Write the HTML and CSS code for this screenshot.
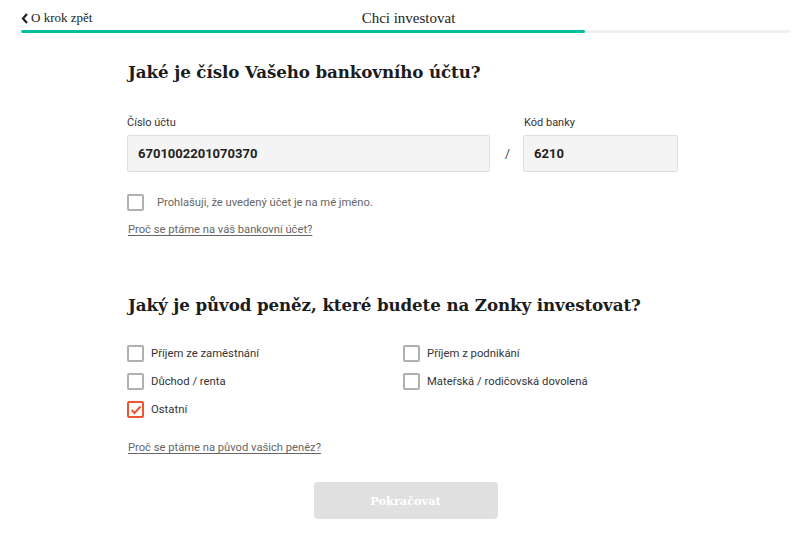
FILE: index.html
```html
<!DOCTYPE html>
<html lang="cs">
<head>
<meta charset="utf-8">
<title>Chci investovat</title>
<link rel="stylesheet" href="styles.css">
</head>
<body>
<header class="topbar">
  <div class="topbar-row">
    <a class="back" href="#">
      <svg class="back-icon" width="8" height="11" viewBox="0 0 8 11"><path d="M6 1 L2 5.5 L6 10" fill="none" stroke="#222" stroke-width="2.2"/></svg>
      <span>O krok zpět</span>
    </a>
    <div class="title">Chci investovat</div>
    <div class="spacer"></div>
  </div>
  <div class="progress"><div class="progress-fill" style="width: 73.3%"></div></div>
</header>

<main class="main">
  <h1 class="heading heading-first">Jaké je číslo Vašeho bankovního účtu?</h1>

  <div class="fields">
    <div class="field field-account">
      <label class="field-label">Číslo účtu</label>
      <div class="input">6701002201070370</div>
    </div>
    <div class="sep">/</div>
    <div class="field field-bank">
      <label class="field-label">Kód banky</label>
      <div class="input">6210</div>
    </div>
  </div>

  <div class="declare">
    <span class="box"></span>
    <span class="declare-text">Prohlašuji, že uvedený účet je na mé jméno.</span>
  </div>

  <a class="why why-first" href="#">Proč se ptáme na váš bankovní účet?</a>

  <h2 class="heading heading-second">Jaký je původ peněz, které budete na Zonky investovat?</h2>

  <div class="options">
    <div class="option"><span class="box"></span><span>Příjem ze zaměstnání</span></div>
    <div class="option"><span class="box"></span><span>Příjem z podnikání</span></div>
    <div class="option"><span class="box"></span><span>Důchod / renta</span></div>
    <div class="option"><span class="box"></span><span>Mateřská / rodičovská dovolená</span></div>
    <div class="option"><span class="box box-checked"><svg width="12" height="10" viewBox="0 0 12 10"><path d="M1.5 5 L4.5 8 L10.5 1.5" fill="none" stroke="#ee5532" stroke-width="2"/></svg></span><span>Ostatní</span></div>
  </div>

  <a class="why why-second" href="#">Proč se ptáme na původ vašich peněz?</a>

  <div class="actions">
    <button class="btn" type="button">Pokračovat</button>
  </div>
</main>
</body>
</html>
```

FILE: styles.css
```css
* { box-sizing: border-box; }

body {
  margin: 0;
  background: #fff;
  font-family: Roboto, "Liberation Sans", sans-serif;
  color: #333;
}

.topbar {
  padding: 0 21px 0 21px;
}

.topbar-row {
  display: grid;
  grid-template-columns: 1fr auto 1fr;
  align-items: center;
  height: 30px;
  padding-top: 6px;
}

.back {
  display: flex;
  align-items: center;
  gap: 2px;
  color: #222;
  text-decoration: none;
  font-family: "Liberation Serif", serif;
  font-size: 13px;
}

.back-icon { display: block; margin-left: 0; }

.title {
  font-family: "Liberation Serif", serif;
  font-size: 15px;
  color: #222;
  padding-left: 6px;
}

.progress {
  height: 3px;
  background: #f0f0f0;
  border-radius: 2px;
  overflow: hidden;
}

.progress-fill {
  height: 100%;
  background: #00bf9c;
  border-radius: 2px;
}

.main {
  width: 555px;
  margin: 0 auto;
}

.heading {
  font-family: "DejaVu Serif", serif;
  font-weight: bold;
  font-size: 16.7px;
  line-height: 24px;
  color: #1c1c1c;
  margin: 0;
  letter-spacing: -0.1px;
}

.heading-first { margin-top: 27px; }
.heading-second { margin-top: 56px; }

.fields {
  display: flex;
  align-items: flex-end;
  margin-top: 32px;
}

.field-label {
  display: block;
  font-size: 11px;
  line-height: 14px;
  color: #333;
  margin-bottom: 5px;
}

.field-account { width: 363px; margin-left: -1px; }
.field-bank { width: 155px; }
.field-bank .field-label { padding-left: 1px; }

.input {
  height: 37px;
  background: #f4f4f4;
  border: 1px solid #dedede;
  border-radius: 2px;
  padding-left: 10px;
  display: flex;
  align-items: center;
  font-size: 13px;
  font-weight: bold;
  color: #222;
}

.sep {
  width: 33px;
  height: 37px;
  display: flex;
  align-items: center;
  justify-content: center;
  font-size: 12px;
  color: #333;
  padding-left: 2px;
}

.box {
  width: 17px;
  height: 17px;
  border: 2px solid #b0b0b0;
  border-radius: 2px;
  flex: none;
  display: flex;
  align-items: center;
  justify-content: center;
  background: #fff;
}

.box-checked { border-color: #ee5532; }
.box-checked svg { display: block; }

.declare {
  display: flex;
  align-items: center;
  gap: 13px;
  margin-top: 22px;
  margin-left: -1px;
  font-size: 11.2px;
  color: #666;
}

.why {
  display: block;
  width: max-content;
  font-size: 11.2px;
  line-height: 14px;
  color: #666;
  text-decoration: underline;
  text-underline-offset: 2px;
}

.why-first { margin-top: 12px; }
.why-second { margin-top: 23px; }

.options {
  display: grid;
  grid-template-columns: 276px 1fr;
  row-gap: 11px;
  margin-top: 28px;
  margin-left: -1px;
}

.option {
  display: flex;
  align-items: center;
  gap: 7px;
  font-size: 11.3px;
  color: #333;
}

.actions {
  display: flex;
  justify-content: center;
  margin-top: 27px;
}

.btn {
  width: 184px;
  height: 37px;
  border: none;
  border-radius: 4px;
  background: #e0e0e0;
  color: #fff;
  font-family: "DejaVu Serif", serif;
  font-weight: bold;
  font-size: 11.3px;
}
```
